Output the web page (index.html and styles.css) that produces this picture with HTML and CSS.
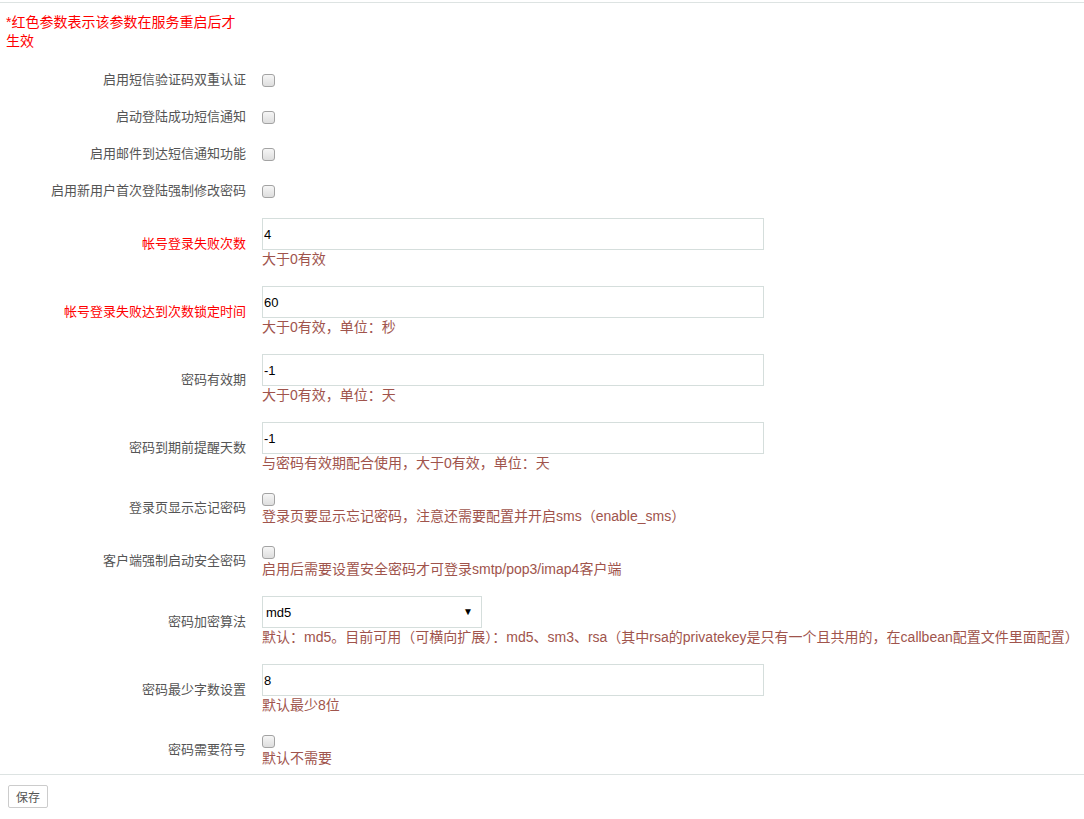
FILE: index.html
```html
<!DOCTYPE html>
<html lang="zh-cn">
<head>
  <meta charset="UTF-8">
  <title>安全参数设置</title>
  <link rel="stylesheet" href="styles.css">
</head>
<body>

<div class="page">
  <p class="note">*红色参数表示该参数在服务重启后才生效</p>

  <form class="form">
    <div class="form-group">
      <label class="label">启用短信验证码双重认证</label>
      <div class="control"><input type="checkbox" class="check"></div>
    </div>
    <div class="form-group">
      <label class="label">启动登陆成功短信通知</label>
      <div class="control"><input type="checkbox" class="check"></div>
    </div>
    <div class="form-group">
      <label class="label">启用邮件到达短信通知功能</label>
      <div class="control"><input type="checkbox" class="check"></div>
    </div>
    <div class="form-group">
      <label class="label">启用新用户首次登陆强制修改密码</label>
      <div class="control"><input type="checkbox" class="check"></div>
    </div>

    <div class="form-group">
      <label class="label restart">帐号登录失败次数</label>
      <div class="control">
        <input type="text" class="text" value="4">
        <span class="hint">大于0有效</span>
      </div>
    </div>
    <div class="form-group">
      <label class="label restart">帐号登录失败达到次数锁定时间</label>
      <div class="control">
        <input type="text" class="text" value="60">
        <span class="hint">大于0有效，单位：秒</span>
      </div>
    </div>
    <div class="form-group">
      <label class="label">密码有效期</label>
      <div class="control">
        <input type="text" class="text" value="-1">
        <span class="hint">大于0有效，单位：天</span>
      </div>
    </div>
    <div class="form-group">
      <label class="label">密码到期前提醒天数</label>
      <div class="control">
        <input type="text" class="text" value="-1">
        <span class="hint">与密码有效期配合使用，大于0有效，单位：天</span>
      </div>
    </div>

    <div class="form-group">
      <label class="label">登录页显示忘记密码</label>
      <div class="control">
        <input type="checkbox" class="check">
        <span class="hint">登录页要显示忘记密码，注意还需要配置并开启sms（enable_sms）</span>
      </div>
    </div>
    <div class="form-group">
      <label class="label">客户端强制启动安全密码</label>
      <div class="control">
        <input type="checkbox" class="check">
        <span class="hint">启用后需要设置安全密码才可登录smtp/pop3/imap4客户端</span>
      </div>
    </div>

    <div class="form-group">
      <label class="label">密码加密算法</label>
      <div class="control">
        <div class="select-wrap">
          <select class="select">
            <option>md5</option>
            <option>sm3</option>
            <option>rsa</option>
          </select>
        </div>
        <span class="hint">默认：md5。目前可用（可横向扩展）：md5、sm3、rsa（其中rsa的privatekey是只有一个且共用的，在callbean配置文件里面配置）</span>
      </div>
    </div>
    <div class="form-group">
      <label class="label">密码最少字数设置</label>
      <div class="control">
        <input type="text" class="text" value="8">
        <span class="hint">默认最少8位</span>
      </div>
    </div>
    <div class="form-group last">
      <label class="label">密码需要符号</label>
      <div class="control">
        <input type="checkbox" class="check">
        <span class="hint">默认不需要</span>
      </div>
    </div>
  </form>

  <div class="footer">
    <button type="button" class="btn">保存</button>
  </div>
</div>

</body>
</html>
```

FILE: styles.css
```css
body {
  margin: 0;
  padding-top: 2px;
  background-color: #fff;
  font-family: "Liberation Sans", "Noto Sans CJK SC", sans-serif;
  overflow-x: hidden;
}
.page {
  border-top: 1px solid #dde3e2;
}
.note {
  width: 240px;
  margin: 10px 0 19px 6px;
  font-size: 14px;
  line-height: 19px;
  color: #f00;
}
.form-group {
  display: flex;
  align-items: center;
  gap: 16px;
  margin-bottom: 18px;
}
.form-group.last {
  margin-bottom: 0;
}
.label {
  width: 246px;
  flex-shrink: 0;
  text-align: right;
  font-size: 13px;
  line-height: 19px;
  color: #555;
}
.label.restart {
  color: #f00;
}
.control {
  display: flex;
  flex-direction: column;
  align-items: flex-start;
}
.check {
  appearance: none;
  -webkit-appearance: none;
  display: block;
  width: 13px;
  height: 13px;
  margin: 3px 0 1px;
  border: 1px solid #a3a3a3;
  border-radius: 3px;
  background: linear-gradient(#f6f6f6, #dedede);
  box-sizing: border-box;
}
.text {
  width: 502px;
  height: 32px;
  padding: 0 1px;
  border: 1px solid #d5dedc;
  box-sizing: border-box;
  font-family: "Liberation Sans", sans-serif;
  font-size: 13px;
  color: #000;
  outline: none;
}
.hint {
  font-size: 14px;
  line-height: 18px;
  color: #a0544c;
  white-space: nowrap;
}
.select-wrap {
  position: relative;
  width: 220px;
  height: 32px;
}
.select-wrap::after {
  content: "▼";
  position: absolute;
  right: 9px;
  top: 10px;
  font-size: 10px;
  line-height: 12px;
  color: #000;
  pointer-events: none;
}
.select {
  appearance: none;
  -webkit-appearance: none;
  width: 100%;
  height: 100%;
  padding: 0 3px;
  border: 1px solid #d5dedc;
  border-radius: 0;
  background-color: #fff;
  font-family: "Liberation Sans", sans-serif;
  font-size: 13px;
  color: #000;
}
.footer {
  margin-top: 7px;
  border-top: 1px solid #dde3e2;
  padding: 10px 8px;
}
.btn {
  height: 23px;
  padding: 0 7px;
  border: 1px solid #ccc;
  border-radius: 2px;
  background-color: #fff;
  font-family: "Liberation Sans", "Noto Sans CJK SC", sans-serif;
  font-size: 12px;
  color: #555;
  cursor: pointer;
}
```
